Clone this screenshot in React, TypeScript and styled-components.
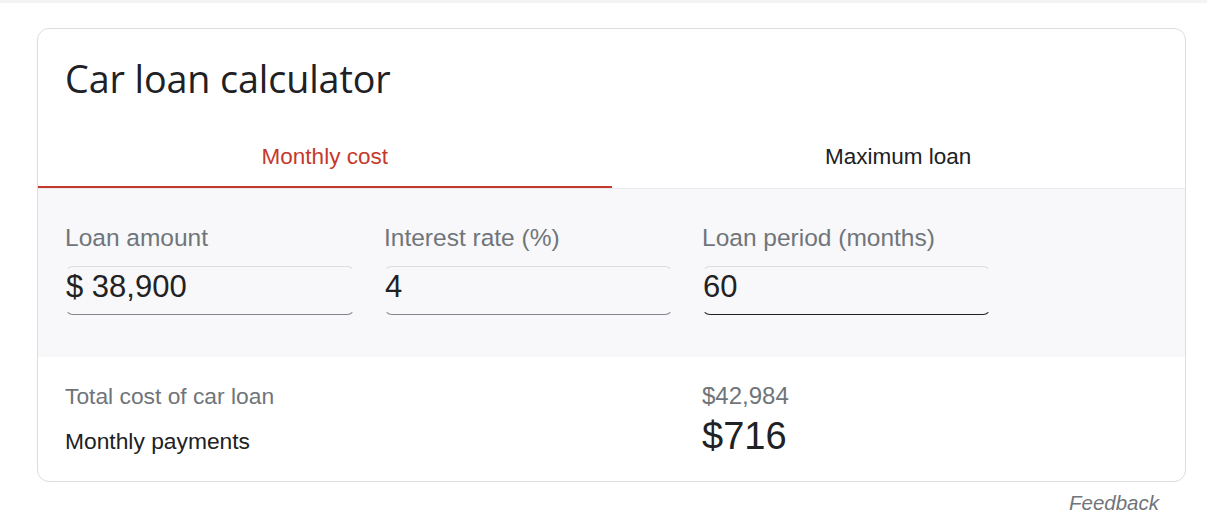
import React from "react";
import styled, { createGlobalStyle } from "styled-components";

const Global = createGlobalStyle`
  html, body { margin: 0; padding: 0; background: #ffffff; }
  body { font-family: "Liberation Sans", Arial, sans-serif; }
`;

const Page = styled.div`
  width: 1207px;
  min-height: 512px;
  display: flex;
  flex-direction: column;
`;

const TopStrip = styled.div`
  height: 3px;
  background: #f3f3f4;
`;

const Card = styled.section`
  margin: 25px 21px 0 37px;
  border: 1px solid #dcdde1;
  border-radius: 12px;
  overflow: hidden;
  background: #ffffff;
`;

const Title = styled.h1`
  margin: 0;
  padding: 27px 0 25px 27px;
  font-family: "Open Sans", sans-serif;
  font-weight: 400;
  font-size: 37.7px;
  line-height: 46px;
  color: #202124;
  letter-spacing: -0.1px;
`;

const TabBar = styled.div`
  display: grid;
  grid-template-columns: 1fr 1fr;
  border-bottom: 1px solid #e8eaed;
`;

const Tab = styled.div<{ $active?: boolean }>`
  height: 58px;
  display: flex;
  align-items: center;
  justify-content: center;
  font-size: 22.5px;
  color: ${(p) => (p.$active ? "#c5392c" : "#202124")};
  border-bottom: 2px solid ${(p) => (p.$active ? "#c5392c" : "transparent")};
  padding-top: 1px;
`;

const InputsPanel = styled.div`
  background: #f8f8fa;
  padding: 35px 27px 42px 27px;
  display: grid;
  grid-template-columns: 290px 289px 289px;
  column-gap: 29px;
`;

const Field = styled.div`
  display: flex;
  flex-direction: column;
  gap: 14px;
`;

const Label = styled.label`
  font-size: 24.5px;
  line-height: 28px;
  color: #70757a;
`;

const Input = styled.input<{ $focused?: boolean }>`
  box-sizing: border-box;
  width: 100%;
  height: 49px;
  margin: 0;
  padding: 0 0 8px 0;
  border: 1px solid;
  border-color: #dadce0 transparent
    ${(p) => (p.$focused ? "#202124" : "#80868b")} transparent;
  border-bottom-width: ${(p) => (p.$focused ? "1.5px" : "1px")};
  border-radius: 8px;
  background: transparent;
  font-family: "Liberation Sans", Arial, sans-serif;
  font-size: 31px;
  color: #222222;
  outline: none;
`;

const Results = styled.div`
  padding: 25px 0 23px 27px;
  display: flex;
  flex-direction: column;
  gap: 4px;
`;

const ResultRow = styled.div`
  display: grid;
  grid-template-columns: 637px 1fr;
  align-items: baseline;
`;

const ResultLabel = styled.span<{ $muted?: boolean }>`
  font-size: 22.8px;
  line-height: 28px;
  color: ${(p) => (p.$muted ? "#70757a" : "#202124")};
`;

const ResultValue = styled.span<{ $big?: boolean }>`
  font-size: ${(p) => (p.$big ? "38px" : "24px")};
  line-height: ${(p) => (p.$big ? "44px" : "28px")};
  color: ${(p) => (p.$big ? "#202124" : "#70757a")};
`;

const Footer = styled.div`
  display: flex;
  justify-content: flex-end;
  padding: 9px 48px 0 0;
`;

const Feedback = styled.a`
  font-size: 20.5px;
  line-height: 24px;
  font-style: italic;
  color: #70757a;
  text-decoration: none;
`;

export default function App() {
  return (
    <Page>
      <Global />
      <TopStrip />
      <Card>
        <Title>Car loan calculator</Title>
        <TabBar>
          <Tab $active>Monthly cost</Tab>
          <Tab>Maximum loan</Tab>
        </TabBar>
        <InputsPanel>
          <Field>
            <Label>Loan amount</Label>
            <Input defaultValue="$ 38,900" />
          </Field>
          <Field>
            <Label>Interest rate (%)</Label>
            <Input defaultValue="4" />
          </Field>
          <Field>
            <Label>Loan period (months)</Label>
            <Input defaultValue="60" $focused />
          </Field>
        </InputsPanel>
        <Results>
          <ResultRow>
            <ResultLabel $muted>Total cost of car loan</ResultLabel>
            <ResultValue>$42,984</ResultValue>
          </ResultRow>
          <ResultRow>
            <ResultLabel>Monthly payments</ResultLabel>
            <ResultValue $big>$716</ResultValue>
          </ResultRow>
        </Results>
      </Card>
      <Footer>
        <Feedback href="#">Feedback</Feedback>
      </Footer>
    </Page>
  );
}
